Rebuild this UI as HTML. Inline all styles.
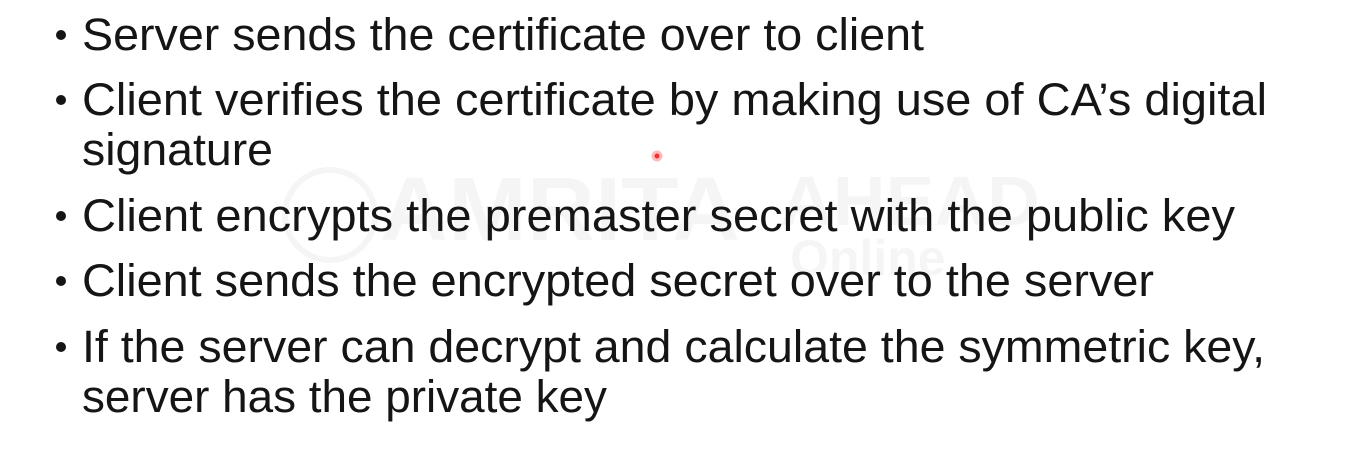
<!DOCTYPE html>
<html><head><meta charset="utf-8"><style>
html,body{margin:0;padding:0;background:#fff;width:1350px;height:472px;overflow:hidden}
svg{display:block}
text{font-family:"Liberation Sans",sans-serif;font-size:45px;fill:#151515}
</style></head><body>
<svg width="1350" height="472" viewBox="0 0 1350 472">
<g opacity="0.035" style="font-weight:bold">
<text x="380" y="240" style="font-size:90px;fill:#000" textLength="360" lengthAdjust="spacingAndGlyphs">AMRITA</text>
<text x="780" y="225" style="font-size:70px;fill:#000" textLength="260" lengthAdjust="spacingAndGlyphs">AHEAD</text>
<text x="790" y="275" style="font-size:50px;fill:#000">Online</text>
<circle cx="330" cy="215" r="45" fill="none" stroke="#000" stroke-width="6"/>
</g>
<g fill="#151515">
<circle cx="61" cy="35" r="5"/>
<circle cx="61" cy="100" r="5"/>
<circle cx="61" cy="216" r="5"/>
<circle cx="61" cy="281" r="5"/>
<circle cx="61" cy="347" r="5"/>
</g>
<text x="82" y="50" textLength="842" lengthAdjust="spacingAndGlyphs">Server sends the certificate over to client</text>
<text x="82" y="115" textLength="1185" lengthAdjust="spacingAndGlyphs">Client verifies the certificate by making use of CA’s digital</text>
<text x="82" y="165" textLength="191" lengthAdjust="spacingAndGlyphs">signature</text>
<text x="82" y="231" textLength="1153" lengthAdjust="spacingAndGlyphs">Client encrypts the premaster secret with the public key</text>
<text x="82" y="296" textLength="1072" lengthAdjust="spacingAndGlyphs">Client sends the encrypted secret over to the server</text>
<text x="82" y="362" textLength="1183" lengthAdjust="spacingAndGlyphs">If the server can decrypt and calculate the symmetric key,</text>
<text x="82" y="412" textLength="525" lengthAdjust="spacingAndGlyphs">server has the private key</text>
<circle cx="657" cy="156" r="4" fill="#e33" stroke="#fbb" stroke-width="3"/>
</svg>
</body></html>
